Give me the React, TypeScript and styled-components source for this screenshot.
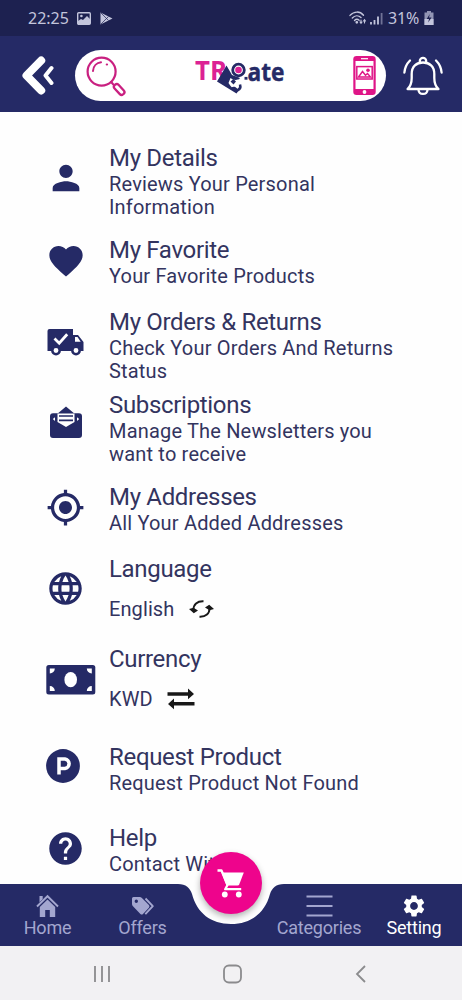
import React from 'react';
import styled, { createGlobalStyle } from 'styled-components';
import { MdPerson, MdFavorite, MdGpsFixed, MdLanguage, MdHelp, MdSettings } from 'react-icons/md';

const NAVY = '#252a66';
const PINK = '#ee048c';

const Global = createGlobalStyle`
  * { box-sizing: border-box; }
  body { margin: 0; background: #fff; font-family: Roboto, "Liberation Sans", sans-serif; }
  svg { display: block; flex: none; }
`;
const Screen = styled.div`
  width: 462px; height: 1000px; display: flex; flex-direction: column; overflow: hidden; background: #fefefe;
`;
const StatusBar = styled.div`
  height: 36px; flex: none; background: #1d2150; color: #c3c5dc; display: flex; align-items: center;
  padding: 0 28px 0 28px; font: 16px "Noto Sans", sans-serif;
`;
const StatusIcons = styled.div<{ $gap: number }>`display: flex; align-items: center; gap: ${p => p.$gap}px;`;
const Clock = styled.span`margin-right: 8px; width: 41px; white-space: nowrap;`;
const Battery = styled.span`margin: 0 4px 0 5px; letter-spacing: -0.1px; width: 32px; white-space: nowrap;`;
const Spacer = styled.div`flex: 1;`;
const Header = styled.header`
  height: 76px; flex: none; background: ${NAVY}; display: flex; align-items: center; padding: 3px 17px 0 21px;
`;
const SearchPill = styled.div`
  width: 311px; height: 51px; margin: 0 17px 0 21px; border-radius: 26px; background: #fff;
  display: flex; align-items: center; justify-content: space-between; padding: 0 10px 0 11px;
`;
const List = styled.main`flex: 1; min-height: 0; overflow: hidden; padding-top: 32px;`;
const Row = styled.section<{ $height: number }>`height: ${p => p.$height}px; display: flex;`;
const IconCell = styled.div<{ $top: number; $left?: number }>`
  width: 109px; flex: none; padding: ${p => p.$top}px 0 0 ${p => p.$left ?? 46}px; color: ${NAVY};
`;
const Copy = styled.div`color: #33345f;`;
const Title = styled.h2`margin: 0; font-size: 24px; font-weight: 400; line-height: 28px; letter-spacing: -0.32px; white-space: nowrap;`;
const Detail = styled.p`margin: 0.6px 0 0; font-size: 20px; line-height: 23.4px; letter-spacing: 0.18px; white-space: pre-line;`;
const Choice = styled.div<{ $gap: number }>`
  display: flex; align-items: center; gap: ${p => p.$gap}px; margin-top: 14px; font-size: 20px; line-height: 24px; letter-spacing: .1px;
`;
const NavBar = styled.nav`height: 62px; flex: none; position: relative; display: flex; justify-content: space-between;`;
const NavShape = styled.svg`position: absolute; left: 0; top: 0;`;
const NavItem = styled.div<{ $width: number; $active?: boolean }>`
  position: relative; width: ${p => p.$width}px; display: flex; flex-direction: column; align-items: center;
  color: ${p => (p.$active ? '#fff' : '#a3a6cf')}; font-size: 18px; line-height: 21px; letter-spacing: -.2px;
`;
const NavGlyph = styled.div`height: 33px; padding-top: 10px; display: flex; align-items: center; justify-content: center;`;
const CartButton = styled.button`
  position: absolute; left: 200px; top: -32px; width: 62px; height: 62px; border: 0; border-radius: 50%; padding: 0;
  background: ${PINK}; color: #fff; display: flex; align-items: center; justify-content: center;
  box-shadow: 0 3px 6px rgba(0,0,0,.3);
`;
const CartSlot = styled.span`width: 62px; height: 30px;`;
const SystemBar = styled.footer`
  height: 54px; flex: none; background: #f2f1f3; display: flex; align-items: center; justify-content: space-between; padding: 2px 96px 0 93px;
`;

const ImageGlyph = () => (
  <svg width="14" height="13" viewBox="0 0 14 13"><rect x=".7" y=".7" width="12.6" height="11.6" rx="1" fill="none" stroke="currentColor" strokeWidth="1.4" /><path d="M1 9l3-2 2 1 4-4 3 3v5H1z" fill="currentColor" /><circle cx="4.4" cy="4" r="1.3" fill="currentColor" /></svg>
);
const PlayGlyph = () => (
  <svg width="13" height="13" viewBox="0 0 13 13"><path d="M0.5 .5L12.5 6.5 .5 12.5z" fill="currentColor" /><path d="M1 1l7.5 7.5M1 12l7.5-7.5" stroke="#1d2150" strokeWidth=".7" /></svg>
);
const WifiGlyph = () => (
  <svg width="18" height="14" viewBox="0 0 18 14" fill="none" stroke="currentColor" strokeWidth="1.4" strokeLinecap="round"><path d="M1 4.4C5 0 11 0 14.5 4.2M3.3 7C6 4.2 9.5 4.2 12 6.6M5.5 9.4c1.6-1.5 3.1-1.5 4.6-.2" /><circle cx="7.8" cy="11.3" r=".7" fill="currentColor" /><path d="M12 9v3M11 11l1 1.3 1-1.3M15.5 12V9M14.5 10l1-1.3 1 1.3" strokeWidth="1.1" /></svg>
);
const SignalGlyph = () => (
  <svg width="13" height="13" viewBox="0 0 13 13" stroke="currentColor" strokeWidth="1.8"><path d="M1 10v2.5M4.5 8v4.5M8 4.5v8" /><path d="M11.6 1v11.5" opacity=".5" /></svg>
);
const BatteryGlyph = () => (
  <svg width="10" height="14" viewBox="0 0 10 14"><path d="M3 0h4v1.5h2.5V14H.5V1.5H3z" fill="#9295b4" /><path d="M.5 8h9v6h-9z" fill="currentColor" /><path d="M5.8 3L2.7 8H5l-.8 3.6L7.5 6.5H5z" fill="#1d2150" /></svg>
);
const BackGlyph = () => (
  <svg width="33" height="42" viewBox="0 0 33 42" fill="none" stroke="#fff" strokeLinecap="round" strokeLinejoin="round"><path d="M20.2 5.5L5.5 20.5l14.7 15" strokeWidth="8" /><path d="M30.5 13L24.500 20.500l6 7.500" strokeWidth="4" /></svg>
);
const SearchGlyph = () => (
  <svg width="40" height="42" viewBox="0 0 40 42" fill="none" stroke="#c92080" strokeLinecap="round"><circle cx="15.6" cy="16.6" r="14" strokeWidth="2.2" /><path d="M7 16c.3-5 3.8-8.200 8-8.700" strokeWidth="2" /><path d="M20.8 9.500h.2" strokeWidth="2.2" /><path d="M25.2 27l2.2 2.6" strokeWidth="2.2" /><rect x="-2.7" y="-6" width="5.4" height="12.5" rx="2.4" strokeWidth="2.3" transform="translate(33 34.3) rotate(-43)" /></svg>
);
const Logo = () => (
  <svg width="94" height="42" viewBox="0 0 94 42">
    <text x="2" y="24.5" fontFamily="Open Sans" fontWeight="700" fontSize="27.5" textLength="32" lengthAdjust="spacingAndGlyphs" fill="#dc2294">TR</text>
    <path d="M33.5 10.500L24 26.500 43.500 38.500l2.500-3.500-5-4 6-8-8-3z" fill={NAVY} />
    <path d="M37.500 23q3.500 3 8 1.200l3 3.800q-1 3-3.800 3.500-4.200-.2-6 .8-1.500-1.500-3.200-4.300z" fill="#fff" />
    <path d="M37.500 26.500l3-2.500 2.500 2.500-2.500 3z" fill={NAVY} />
    <path d="M39.500 32.500q2 3.800 5.500 2.500 3.200-1.500 2-5.500" fill="none" stroke={NAVY} strokeWidth="2.6" />
    <circle cx="45.500" cy="15" r="5.800" fill="#fff" stroke={NAVY} strokeWidth="2.800" />
    <circle cx="45.500" cy="15" r="3.300" fill="#dc2294" />
    <path d="M51.500 23.300h3" stroke={NAVY} strokeWidth="2.800" />
    <text x="54.500" y="25.500" fontFamily="Open Sans" fontWeight="700" fontSize="25" textLength="37" lengthAdjust="spacingAndGlyphs" fill={NAVY} stroke={NAVY} strokeWidth=".4">ate</text>
  </svg>
);
const PhoneGlyph = () => (
  <svg width="23" height="39" viewBox="0 0 23 39"><rect x=".3" width="22.4" height="39" rx="3.2" fill="#df1587" /><path d="M2.500 5h18v28h-18z" fill="#fff" /><path d="M8 2.700h7" stroke="#fff" strokeWidth="1.2" /><circle cx="11.5" cy="36" r="1.9" fill="#fff" /><rect x="3.8" y="10.6" width="15.4" height="12.4" fill="#fff" stroke="#df1587" strokeWidth="1.5" /><path d="M5.500 21l4-5.500 3 3.800 2-1.800 3 3.500z" fill="none" stroke="#df1587" strokeWidth="1.4" /><circle cx="15" cy="14.2" r="1.8" fill="#df1587" /></svg>
);
const BellGlyph = () => (
  <svg width="40" height="40" viewBox="0 0 40 40" fill="none" stroke="#fff" strokeWidth="2.3" strokeLinecap="round" strokeLinejoin="round"><path d="M4.500 33c3.500-3 4.200-5.500 4.200-11v-4C8.700 10.500 13.500 6.500 20 6.500s11.300 4 11.300 11.500v4c0 5.500.7 8 4.200 11zM15.500 34c.5 5.200 8.500 5.200 9 0M16.800 6.500V5a3.200 3.200 0 016.400 0v1.500M7 4.500C3.500 8 1.800 11.700 1.400 16.500M33 4.500c3.500 3.500 5.200 7.200 5.600 12" /></svg>
);
const TruckGlyph = () => (
  <svg width="38" height="28" viewBox="0 0 38 28"><path d="M3.500 1H27v6h5l5.500 7v9H1.500V3a2 2 0 012-2z" fill="currentColor" /><path d="M29 9h2.500l3.200 4.800H29z" fill="#fff" /><path d="M8.500 10.500l4.700 4.700 8-9" fill="none" stroke="#fff" strokeWidth="2.8" /><circle cx="10" cy="22.5" r="3.7" fill="#fff" stroke="currentColor" strokeWidth="2.5" /><circle cx="30" cy="22.5" r="3.7" fill="#fff" stroke="currentColor" strokeWidth="2.5" /></svg>
);
const MailGlyph = () => (
  <svg width="34" height="33" viewBox="0 0 34 33"><path d="M4 7.300h5L17 .5l8 6.800h5a3 3 0 013 3V29a3 3 0 01-3 3H4a3 3 0 01-3-3V10.300a3 3 0 013-3z" fill="currentColor" /><path d="M8.500 7.500h17v8.500L17 21l-8.500-5z" fill="#fff" /><path d="M10 10h14M10 14.300h14" stroke="currentColor" strokeWidth="1.7" /><path d="M3.800 13l2.200-1.700V15zM30.200 13L28 11.300V15z" fill="#fff" /></svg>
);
const BanknoteGlyph = () => (
  <svg width="50" height="31" viewBox="0 0 50 31"><rect x=".3" y="1" width="49" height="29.5" rx="2.5" fill="currentColor" /><ellipse cx="24.7" cy="15.7" rx="6.3" ry="7.6" fill="#fff" /><path d="M3.800 4.400h5a5 5 0 01-5 5zM45.800 4.400h-5a5 5 0 005 5zM3.800 27h5a5 5 0 00-5-5zM45.800 27h-5a5 5 0 015-5z" fill="#fff" /></svg>
);
const ParkingGlyph = () => (
  <svg width="34" height="34" viewBox="0 0 34 34"><circle cx="17" cy="17" r="16.9" fill="currentColor" /><path d="M13 25.500V10h6a4.800 4.800 0 010 9.500h-6" fill="none" stroke="#fff" strokeWidth="3.5" /></svg>
);
const RefreshGlyph = () => (
  <svg width="25" height="20" viewBox="0 0 25 20"><path d="M4.500 10.500C4.500 5.500 8 2 14.500 2.300M20.500 9.500C20.500 14.500 17 18 10.500 17.700" fill="none" stroke="#181818" strokeWidth="1.9" /><path d="M0 10l4.500-1.200L9 11.500 4.800 14.200zM25 10l-4.500 1.200L16 8.500l4.200-2.700z" fill="#181818" /></svg>
);
const SwapGlyph = () => (
  <svg width="28" height="22" viewBox="0 0 28 22" fill="#181818"><path d="M.5 4.200H21V.5L27 6l-6 5.300V7.700H.5zM27.500 14H7v-3.500L1 16l6 5.300v-3.700h20.500z" /></svg>
);
const HomeGlyph = () => (
  <svg width="23" height="23" viewBox="0 0 23 23"><path d="M1 12.500L11.500 2.200 22 12.500" fill="none" stroke="currentColor" strokeWidth="1.9" /><path d="M3.500 2h3.200v3.200L3.500 8.300zM3.800 13l7.700-7.500 7.700 7.500v10h-5.400v-7H9.200v7H3.800z" fill="currentColor" /></svg>
);
const TagsGlyph = () => (
  <svg width="24" height="20" viewBox="0 0 24 20"><path fillRule="evenodd" d="M2.500 1h6.200q1.300 0 2.200.9l7 7.200q1.200 1.300 0 2.600L12 18q-1.300 1.200-2.600 0L2 10.300Q1 9.300 1 8V2.500Q1 1 2.500 1zm2.800 2.500a1.700 1.700 0 100 3.400 1.700 1.700 0 000-3.400z" fill="currentColor" /><path d="M14.500 2.500l7.300 7.700-7.500 8" fill="none" stroke="currentColor" strokeWidth="1.9" strokeLinejoin="round" /></svg>
);
const MenuGlyph = () => (
  <svg width="27" height="22" viewBox="0 0 27 22"><path d="M.5 1.500h26M.5 11h26M.5 20.500h26" stroke="currentColor" strokeWidth="1.8" /></svg>
);
const CartGlyph = () => (
  <svg width="32" height="32" viewBox="0 0 32 32"><path d="M2.500 3.500h4l6 14.500-2.300 4.200h16" fill="none" stroke="currentColor" strokeWidth="2.3" strokeLinejoin="round" /><path d="M6.500 5.500h22.300l-4.500 11.800q-.5 1.200-1.800 1.200H11.500z" fill="currentColor" /><circle cx="9.8" cy="27.5" r="2.9" fill="currentColor" /><circle cx="23.8" cy="27.5" r="2.9" fill="currentColor" /></svg>
);

type Entry = { title: string; detail?: string; height: number; top: number; left?: number; icon: React.ReactNode; choice?: React.ReactNode };
const entries: Entry[] = [
  { title: 'My Details', detail: 'Reviews Your Personal\nInformation', height: 92, top: 14, icon: <MdPerson size={40} /> },
  { title: 'My Favorite', detail: 'Your Favorite Products', height: 72, top: 5, icon: <MdFavorite size={40} /> },
  { title: 'My Orders & Returns', detail: 'Check Your Orders And Returns\nStatus', height: 83, top: 20, icon: <TruckGlyph /> },
  { title: 'Subscriptions', detail: 'Manage The Newsletters you\nwant to receive', height: 92, top: 15, left: 49, icon: <MailGlyph /> },
  { title: 'My Addresses', detail: 'All Your Added Addresses', height: 72, top: 5, icon: <MdGpsFixed size={39} /> },
  { title: 'Language', height: 90, top: 14, icon: <MdLanguage size={39} />, choice: <Choice $gap={15}>English<RefreshGlyph /></Choice> },
  { title: 'Currency', height: 98, top: 19, icon: <BanknoteGlyph />, choice: <Choice $gap={14}>KWD<SwapGlyph /></Choice> },
  { title: 'Request Product', detail: 'Request Product Not Found', height: 81, top: 6, icon: <ParkingGlyph /> },
  { title: 'Help', detail: 'Contact With', height: 60, top: 5, icon: <MdHelp size={39} /> },
];

export default function App() {
  return (
    <Screen>
      <Global />
      <StatusBar>
        <Clock>22:25</Clock>
        <StatusIcons $gap={9}><ImageGlyph /><PlayGlyph /></StatusIcons>
        <Spacer />
        <StatusIcons $gap={3}><WifiGlyph /><SignalGlyph /></StatusIcons>
        <Battery>31%</Battery><BatteryGlyph />
      </StatusBar>
      <Header>
        <BackGlyph />
        <SearchPill><SearchGlyph /><Logo /><PhoneGlyph /></SearchPill>
        <BellGlyph />
      </Header>
      <List>
        {entries.map(e => (
          <Row key={e.title} $height={e.height}>
            <IconCell $top={e.top} $left={e.left}>{e.icon}</IconCell>
            <Copy><Title>{e.title}</Title>{e.detail && <Detail>{e.detail}</Detail>}{e.choice}</Copy>
          </Row>
        ))}
      </List>
      <NavBar>
        <NavShape width="462" height="62" viewBox="0 0 462 62">
          <path d="M0 0H178C186 0 190 4 192 10C197 29 211 40 231 40S265 29 270 10C272 4 276 0 284 0H462V62H0Z" fill={NAVY} />
        </NavShape>
        <NavItem $width={95}><NavGlyph><HomeGlyph /></NavGlyph>Home</NavItem>
        <NavItem $width={95}><NavGlyph><TagsGlyph /></NavGlyph>Offers</NavItem>
        <NavItem $width={82}><CartSlot /></NavItem>
        <NavItem $width={94}><NavGlyph><MenuGlyph /></NavGlyph>Categories</NavItem>
        <NavItem $width={96} $active><NavGlyph><MdSettings size={26} /></NavGlyph>Setting</NavItem>
        <CartButton aria-label="Cart"><CartGlyph /></CartButton>
      </NavBar>
      <SystemBar>
        <svg width="18" height="18" viewBox="0 0 18 18" stroke="#8b8b8d" strokeWidth="1.8"><path d="M2 1v16M9 1v16M16 1v16" /></svg>
        <svg width="20" height="20" viewBox="0 0 20 20"><rect x="1" y="1.5" width="17" height="17" rx="5" fill="none" stroke="#8b8b8d" strokeWidth="1.8" /></svg>
        <svg width="11" height="18" viewBox="0 0 11 18"><path d="M10 1L2 9l8 8" fill="none" stroke="#8b8b8d" strokeWidth="1.8" /></svg>
      </SystemBar>
    </Screen>
  );
}
